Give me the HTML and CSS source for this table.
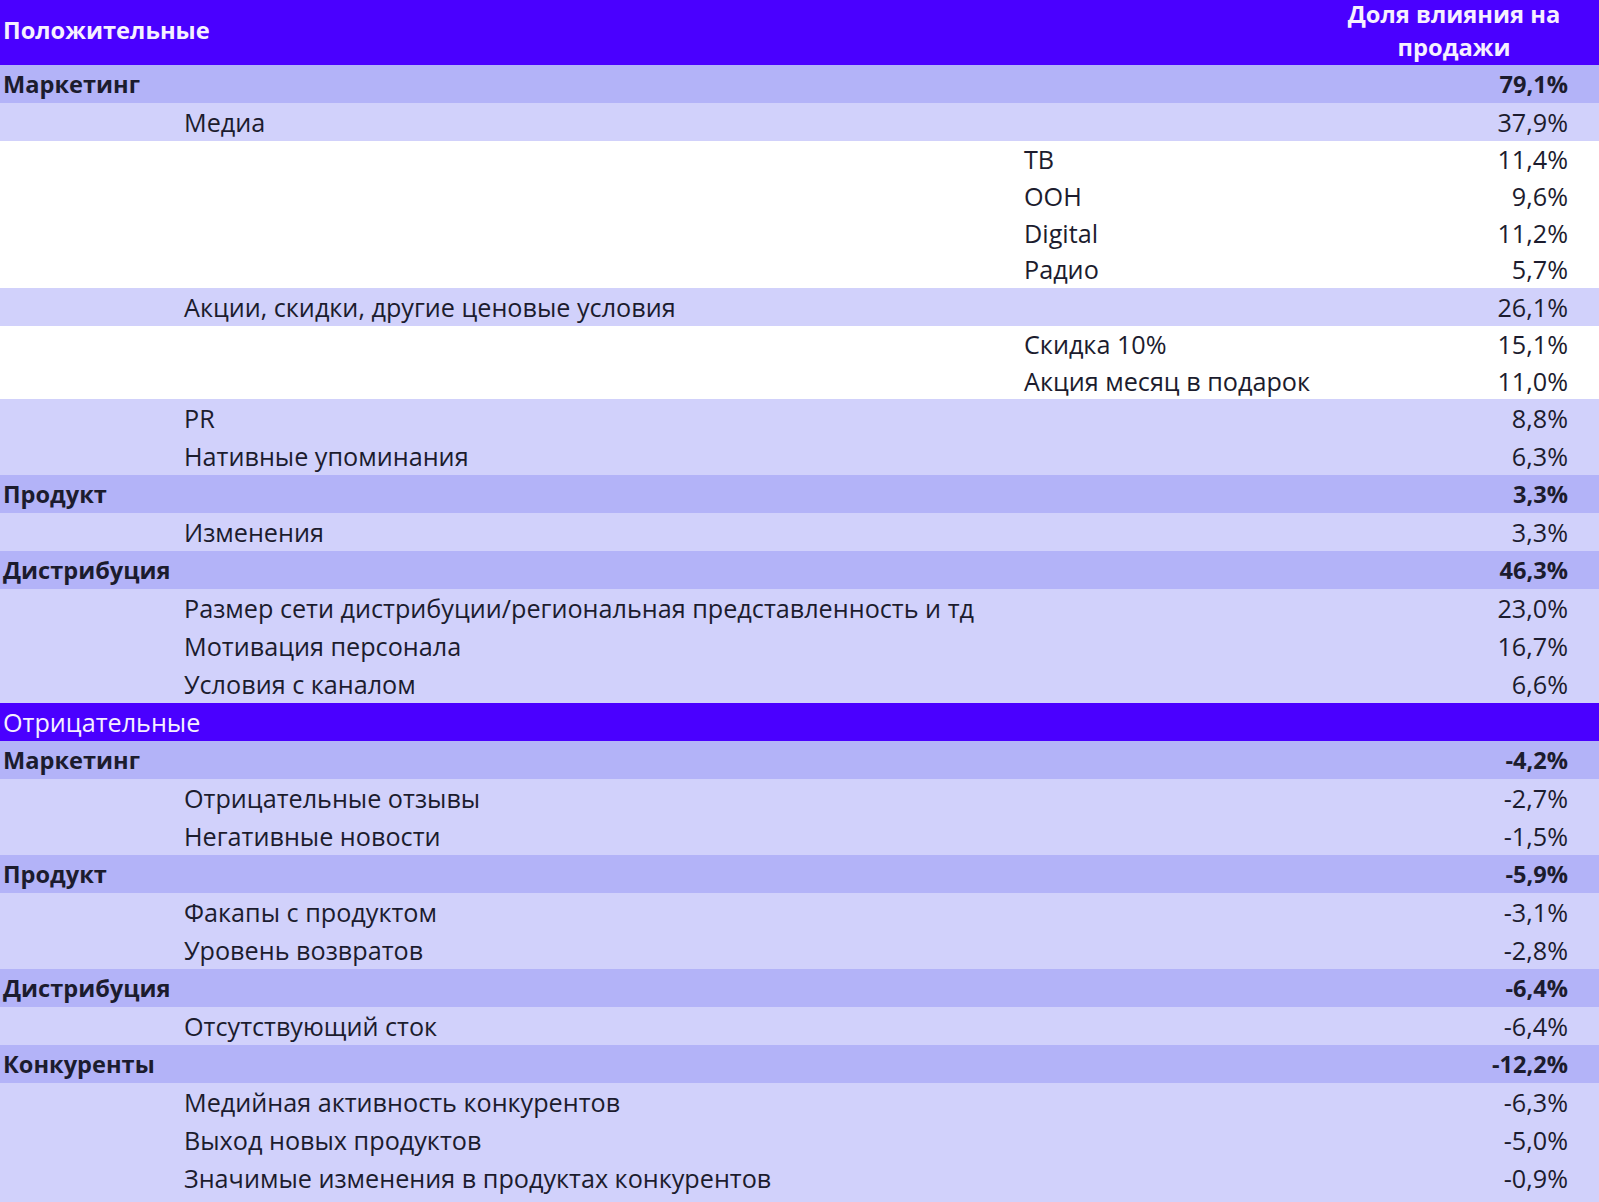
FILE: index.html
```html
<!DOCTYPE html>
<html lang="ru">
<head>
<meta charset="utf-8">
<title>Доля влияния на продажи</title>
<link rel="stylesheet" href="styles.css">
</head>
<body>
<div class="table">
  <div class="row head">
    <div class="c-cat">Положительные</div>
    <div class="c-val head-val">Доля влияния на<br>продажи</div>
  </div>

  <div class="row cat"><div class="c-cat">Маркетинг</div><div class="c-val">79,1%</div></div>
  <div class="row sub"><div class="c-sub">Медиа</div><div class="c-val">37,9%</div></div>
  <div class="row l3"><div class="c-l3">ТВ</div><div class="c-val">11,4%</div></div>
  <div class="row l3"><div class="c-l3">ООН</div><div class="c-val">9,6%</div></div>
  <div class="row l3"><div class="c-l3">Digital</div><div class="c-val">11,2%</div></div>
  <div class="row l3"><div class="c-l3">Радио</div><div class="c-val">5,7%</div></div>
  <div class="row sub"><div class="c-sub">Акции, скидки, другие ценовые условия</div><div class="c-val">26,1%</div></div>
  <div class="row l3"><div class="c-l3">Скидка 10%</div><div class="c-val">15,1%</div></div>
  <div class="row l3"><div class="c-l3">Акция месяц в подарок</div><div class="c-val">11,0%</div></div>
  <div class="row sub"><div class="c-sub">PR</div><div class="c-val">8,8%</div></div>
  <div class="row sub"><div class="c-sub">Нативные упоминания</div><div class="c-val">6,3%</div></div>
  <div class="row cat"><div class="c-cat">Продукт</div><div class="c-val">3,3%</div></div>
  <div class="row sub"><div class="c-sub">Изменения</div><div class="c-val">3,3%</div></div>
  <div class="row cat"><div class="c-cat">Дистрибуция</div><div class="c-val">46,3%</div></div>
  <div class="row sub"><div class="c-sub">Размер сети дистрибуции/региональная представленность и тд</div><div class="c-val">23,0%</div></div>
  <div class="row sub"><div class="c-sub">Мотивация персонала</div><div class="c-val">16,7%</div></div>
  <div class="row sub"><div class="c-sub">Условия с каналом</div><div class="c-val">6,6%</div></div>

  <div class="row section"><div class="c-cat">Отрицательные</div></div>

  <div class="row cat"><div class="c-cat">Маркетинг</div><div class="c-val">-4,2%</div></div>
  <div class="row sub"><div class="c-sub">Отрицательные отзывы</div><div class="c-val">-2,7%</div></div>
  <div class="row sub"><div class="c-sub">Негативные новости</div><div class="c-val">-1,5%</div></div>
  <div class="row cat"><div class="c-cat">Продукт</div><div class="c-val">-5,9%</div></div>
  <div class="row sub"><div class="c-sub">Факапы с продуктом</div><div class="c-val">-3,1%</div></div>
  <div class="row sub"><div class="c-sub">Уровень возвратов</div><div class="c-val">-2,8%</div></div>
  <div class="row cat"><div class="c-cat">Дистрибуция</div><div class="c-val">-6,4%</div></div>
  <div class="row sub"><div class="c-sub">Отсутствующий сток</div><div class="c-val">-6,4%</div></div>
  <div class="row cat"><div class="c-cat">Конкуренты</div><div class="c-val">-12,2%</div></div>
  <div class="row sub"><div class="c-sub">Медийная активность конкурентов</div><div class="c-val">-6,3%</div></div>
  <div class="row sub"><div class="c-sub">Выход новых продуктов</div><div class="c-val">-5,0%</div></div>
  <div class="row sub last"><div class="c-sub">Значимые изменения в продуктах конкурентов</div><div class="c-val">-0,9%</div></div>
</div>
</body>
</html>
```
FILE: styles.css
```css
html, body {
  margin: 0;
  padding: 0;
  background: #ffffff;
}

body {
  font-family: "Open Sans", "DejaVu Sans", sans-serif;
  font-size: 25.2px;
  color: #1c1c2e;
}

.table {
  display: flex;
  flex-direction: column;
  width: 1599px;
}

.row {
  display: grid;
  grid-template-columns: 184px 840px 294px 272px 1fr;
  align-items: center;
  height: 38px;
  white-space: nowrap;
}

.c-cat {
  grid-column: 1 / 4;
  padding-left: 3px;
}

.c-sub {
  grid-column: 2 / 4;
}

.c-l3 {
  grid-column: 3 / 4;
}

.c-val {
  grid-column: 4 / 5;
  text-align: right;
  padding-right: 22px;
}

.head {
  height: 65px;
  background: #4a00ff;
  color: #f6f0ff;
  font-weight: 700;
  font-size: 23.7px;
}

.head .c-cat {
  margin-top: -6px;
}

.head-val {
  align-self: start;
  text-align: center;
  padding-right: 0;
  line-height: 33px;
  margin-top: -2px;
}

.cat {
  background: #b3b3f8;
  font-weight: 700;
  font-size: 23.6px;
}

.sub {
  background: #d1d1fb;
}

.l3 {
  height: 36.7px;
  background: #ffffff;
}

.section {
  background: #4a00ff;
  color: #f6f0ff;
}

.last {
  height: 43px;
  align-items: start;
}

.last > div {
  line-height: 38px;
}
```
